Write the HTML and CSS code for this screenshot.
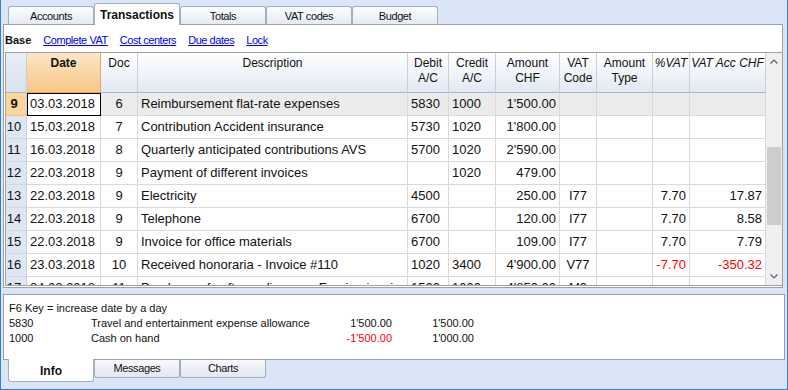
FILE: index.html
```html
<!DOCTYPE html>
<html>
<head>
    <meta charset="utf-8">
    <title>Transactions</title>
    <link rel="stylesheet" href="styles.css">
</head>
<body>
    <div class="tabs">
        <div class="tab">Accounts</div>
        <div class="tab on">Transactions</div>
        <div class="tab">Totals</div>
        <div class="tab">VAT codes</div>
        <div class="tab">Budget</div>
    </div>

    <div class="panel">
        <div class="links">
            <b>Base</b>
            <a>Complete VAT</a>
            <a>Cost centers</a>
            <a>Due dates</a>
            <a>Lock</a>
        </div>

        <div class="grid">
            <div class="sheet">
                <div class="row head">
                    <div class="n"></div>
                    <div class="d"><b>Date</b></div>
                    <div>Doc</div>
                    <div>Description</div>
                    <div>Debit<br>A/C</div>
                    <div>Credit<br>A/C</div>
                    <div>Amount<br>CHF</div>
                    <div>VAT<br>Code</div>
                    <div>Amount<br>Type</div>
                    <div class="i">%VAT</div>
                    <div class="i">VAT Acc CHF</div>
                </div>
                <div class="row sel">
                    <div class="n"><b>9</b></div>
                    <div class="d cur">03.03.2018</div>
                    <div class="c">6</div>
                    <div>Reimbursement flat-rate expenses</div>
                    <div>5830</div>
                    <div>1000</div>
                    <div class="r">1'500.00</div>
                    <div></div><div></div><div></div><div></div>
                </div>
                <div class="row">
                    <div class="n">10</div>
                    <div class="d">15.03.2018</div>
                    <div class="c">7</div>
                    <div>Contribution Accident insurance</div>
                    <div>5730</div>
                    <div>1020</div>
                    <div class="r">1'800.00</div>
                    <div></div><div></div><div></div><div></div>
                </div>
                <div class="row">
                    <div class="n">11</div>
                    <div class="d">16.03.2018</div>
                    <div class="c">8</div>
                    <div>Quarterly anticipated contributions AVS</div>
                    <div>5700</div>
                    <div>1020</div>
                    <div class="r">2'590.00</div>
                    <div></div><div></div><div></div><div></div>
                </div>
                <div class="row">
                    <div class="n">12</div>
                    <div class="d">22.03.2018</div>
                    <div class="c">9</div>
                    <div>Payment of different invoices</div>
                    <div></div>
                    <div>1020</div>
                    <div class="r">479.00</div>
                    <div></div><div></div><div></div><div></div>
                </div>
                <div class="row">
                    <div class="n">13</div>
                    <div class="d">22.03.2018</div>
                    <div class="c">9</div>
                    <div>Electricity</div>
                    <div>4500</div>
                    <div></div>
                    <div class="r">250.00</div>
                    <div class="c">I77</div>
                    <div></div>
                    <div class="r">7.70</div>
                    <div class="r">17.87</div>
                </div>
                <div class="row">
                    <div class="n">14</div>
                    <div class="d">22.03.2018</div>
                    <div class="c">9</div>
                    <div>Telephone</div>
                    <div>6700</div>
                    <div></div>
                    <div class="r">120.00</div>
                    <div class="c">I77</div>
                    <div></div>
                    <div class="r">7.70</div>
                    <div class="r">8.58</div>
                </div>
                <div class="row">
                    <div class="n">15</div>
                    <div class="d">22.03.2018</div>
                    <div class="c">9</div>
                    <div>Invoice for office materials</div>
                    <div>6700</div>
                    <div></div>
                    <div class="r">109.00</div>
                    <div class="c">I77</div>
                    <div></div>
                    <div class="r">7.70</div>
                    <div class="r">7.79</div>
                </div>
                <div class="row">
                    <div class="n">16</div>
                    <div class="d">23.03.2018</div>
                    <div class="c">10</div>
                    <div>Received honoraria - Invoice #110</div>
                    <div>1020</div>
                    <div>3400</div>
                    <div class="r">4'900.00</div>
                    <div class="c">V77</div>
                    <div></div>
                    <div class="r neg">-7.70</div>
                    <div class="r neg">-350.32</div>
                </div>
                <div class="row">
                    <div class="n">17</div>
                    <div class="d">24.03.2018</div>
                    <div class="c">11</div>
                    <div>Purchase of software licence - Foreign invoice</div>
                    <div>1500</div>
                    <div>1000</div>
                    <div class="r">4'850.00</div>
                    <div class="c">M0</div>
                    <div></div><div></div><div></div>
                </div>
            </div>
            <div class="scroll">
                <div class="sb-btn">
                    <svg width="8" height="5" viewBox="0 0 8 5"><polyline points="0.5,4.5 4,1 7.5,4.5" fill="none" stroke="#606060" stroke-width="1.2"/></svg>
                </div>
                <div class="track"><div class="thumb"></div></div>
                <div class="sb-btn">
                    <svg width="8" height="5" viewBox="0 0 8 5"><polyline points="0.5,0.5 4,4 7.5,0.5" fill="none" stroke="#606060" stroke-width="1.2"/></svg>
                </div>
            </div>
        </div>
    </div>

    <div class="info">
        <div>F6 Key = increase date by a day</div>
        <div class="info-row">
            <span>5830</span>
            <span>Travel and entertainment expense allowance</span>
            <span class="r">1'500.00</span>
            <span class="r">1'500.00</span>
        </div>
        <div class="info-row">
            <span>1000</span>
            <span>Cash on hand</span>
            <span class="r neg">-1'500.00</span>
            <span class="r">1'000.00</span>
        </div>
    </div>

    <div class="btabs">
        <div class="btab on">Info</div>
        <div class="btab">Messages</div>
        <div class="btab">Charts</div>
    </div>
</body>
</html>
```

FILE: styles.css
```css
body {
 margin: 0;
 width: 788px;
 height: 390px;
 box-sizing: border-box;
 border: 1px solid #2f7ed8;
 border-top: 0;
 background: #dae5f7;
 font-family: "Liberation Sans", Arial, sans-serif;
 color: #111;
 overflow: hidden; }

/* top tab strip */
.tabs {
 display: flex;
 align-items: flex-end;
 height: 24px;
 padding-left: 7px;
 position: relative;
 z-index: 1; }
.tab {
 width: 86px;
 height: 18px;
 box-sizing: border-box;
 border: 1px solid #a3aebe;
 border-bottom: 0;
 border-radius: 3px 3px 0 0;
 background: linear-gradient(#fdfdfe, #e4eaf3);
 font-size: 11px;
 letter-spacing: -0.4px;
 line-height: 18px;
 text-align: center; }
.tab.on {
 height: 22px;
 margin-bottom: -1px;
 background: #fff;
 font-size: 12px;
 font-weight: bold;
 letter-spacing: 0;
 line-height: 23px; }

.panel {
 margin: 0 4px 0 2px;
 height: 264px;
 box-sizing: border-box;
 border: 1px solid #a0a0a0;
 background: #fff; }

.links {
 height: 27px;
 box-sizing: border-box;
 padding: 9px 0 0 1px;
 display: flex;
 gap: 12px;
 font-size: 11px;
 line-height: 13px; }
.links a {
 color: #0000f0;
 text-decoration: underline;
 letter-spacing: -0.45px; }

/* grid */
.grid {
 margin: 0 0 1px 1px;
 height: 234px;
 box-sizing: border-box;
 border: 1px solid #a0a0a0;
 border-right: 0;
 display: flex; }
.sheet {
 width: 760px;
 overflow: hidden; }
.row {
 display: grid;
 grid-template-columns: 21px 74px 37px 270px 41px 47px 64px 37px 56px 37px 76px;
 height: 23px; }
.row > div {
 min-width: 0;
 border-right: 1px solid #d9d9d9;
 border-bottom: 1px solid #d9d9d9;
 padding: 0 3px;
 font-size: 13px;
 line-height: 22px;
 white-space: nowrap;
 overflow: hidden; }
.row > .n {
 padding: 0 4px 0 0;
 background: #dee6f2;
 border-right-color: #c9d2df;
 border-bottom-color: #d0d8e4;
 text-align: center; }
.row .c { text-align: center; }
.row .r { text-align: right; }
.neg { color: #f00; }

.row.head { height: 40px; }
.row.head > div {
 padding: 3px 0 0;
 font-size: 12px;
 line-height: 15px;
 text-align: center;
 background: linear-gradient(#fff, #e2e9f4);
 border-right-color: #c6cfdc;
 border-bottom-color: #a9b7ca;
 overflow: visible; }
.row.head > .n { background: linear-gradient(#e9eef6, #d9e2ef); }
.row.head > .d {
 background: linear-gradient(#fde6c6, #f8c684);
 border-right-color: #f0a64c;
 border-bottom-color: #f0a64c; }
.row.head > .i { font-style: italic; }

.row.sel > div { background: #ebebeb; }
.row.sel > .n { background: #fbd59f; border-bottom-color: #f0c080; }
.row.sel > .cur {
 background: #fff;
 border-right-color: #000;
 border-bottom-color: #000;
 box-shadow: inset 1px 1px 0 #000; }

/* scrollbar */
.scroll {
 flex: 1;
 display: flex;
 flex-direction: column;
 background: #f0f0f0; }
.sb-btn {
 height: 17px;
 display: flex;
 align-items: center;
 justify-content: center; }
.track { flex: 1; }
.thumb {
 margin: 77px 1px 0 1px;
 height: 78px;
 background: #cdcdcd; }

/* info panel */
.info {
 margin: 6px 2px 0 2px;
 height: 66px;
 box-sizing: border-box;
 border: 1px solid #a0a0a0;
 background: #fff;
 padding: 6px 0 0 5px;
 font-size: 11px;
 line-height: 15px; }
.info-row {
 display: grid;
 grid-template-columns: 82px 231px 70px 82px; }
.info-row .r { text-align: right; }

.btabs {
 display: flex;
 padding-left: 7px; }
.btab {
 width: 86px;
 height: 18px;
 box-sizing: border-box;
 border: 1px solid #a3aebe;
 border-top: 0;
 border-radius: 0 0 3px 3px;
 background: linear-gradient(#f7f9fc, #e3e9f2);
 font-size: 11px;
 letter-spacing: -0.4px;
 line-height: 17px;
 text-align: center; }
.btab.on {
 height: 23px;
 margin-top: -1px;
 background: #fff;
 font-size: 12px;
 font-weight: bold;
 letter-spacing: 0;
 line-height: 24px; }
```
